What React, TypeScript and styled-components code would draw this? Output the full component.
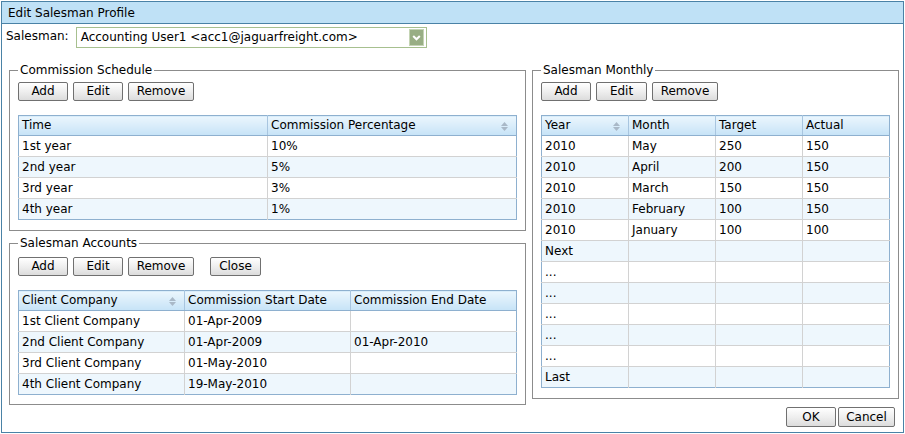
import React from "react";
import styled, { createGlobalStyle } from "styled-components";

const GlobalStyle = createGlobalStyle`
  html, body {
    margin: 0;
    padding: 0;
    background: #ffffff;
  }
  body {
    font-family: "DejaVu Sans", Verdana, sans-serif;
    font-size: 12px;
    color: #000000;
  }
  * {
    box-sizing: border-box;
  }
`;

const Dialog = styled.div`
  margin: 1px;
  width: 903px;
  height: 432px;
  border: 1px solid #4a82a6;
  display: flex;
  flex-direction: column;
`;

const TitleBar = styled.div`
  height: 22px;
  padding: 2px 0 0 6px;
  line-height: 19px;
  background: #bfe1f6;
  border-bottom: 1px solid #4a82a6;
`;

const SalesmanRow = styled.div`
  display: flex;
  align-items: flex-start;
  gap: 7px;
  margin-top: 3px;
  padding-left: 4px;
`;

const FieldLabel = styled.label`
  margin-top: 2px;
  line-height: 14px;
`;

const SelectBox = styled.div`
  width: 351px;
  height: 21px;
  border: 1px solid #a7c08f;
  display: flex;
  align-items: center;
  justify-content: space-between;
  padding: 0 2px 0 4px;
  line-height: 19px;
`;

const Columns = styled.div`
  display: flex;
  gap: 6px;
  margin-top: 15px;
  padding-left: 7px;
`;

const LeftColumn = styled.div`
  width: 517px;
  display: flex;
  flex-direction: column;
  gap: 5px;
`;

const RightColumn = styled.div`
  width: 367px;
  display: flex;
  flex-direction: column;
`;

const GroupBox = styled.fieldset<{ $top?: number; $bottom?: number }>`
  margin: 0;
  padding: ${(p) => p.$top ?? 5}px 8px ${(p) => p.$bottom ?? 10}px;
  border: 1px solid #8c8c8c;
  min-width: 0;
`;

const GroupLegend = styled.legend`
  padding: 0 2px;
  line-height: 14px;
`;

const ButtonRow = styled.div`
  display: flex;
  gap: 5px;
  margin-bottom: 14px;
`;

const PushButton = styled.button<{ $w: number; $h?: number; $gapBefore?: number }>`
  width: ${(p) => p.$w}px;
  height: ${(p) => p.$h ?? 19}px;
  margin-left: ${(p) => p.$gapBefore ?? 0}px;
  padding: 0;
  font: inherit;
  line-height: 17px;
  color: #000000;
  background: linear-gradient(#ffffff, #ededed 55%, #dcdcdc);
  border: 1px solid #707070;
  border-radius: 2px;
`;

const Footer = styled.div`
  display: flex;
  justify-content: flex-end;
  gap: 2px;
  margin-top: 8px;
  padding-right: 4px;
`;

const Grid = styled.table`
  width: 100%;
  table-layout: fixed;
  border-collapse: collapse;
  border: 1px solid #8eb0cf;
`;

const HeadCell = styled.th`
  padding: 0 3px;
  line-height: 19px;
  font-weight: normal;
  text-align: left;
  white-space: nowrap;
  background: linear-gradient(#ebf6fd, #c6e3f7);
  border-bottom: 1px solid #8eb0cf;
  border-right: 1px solid #a8c5df;
  &:last-child {
    border-right: none;
  }
`;

const HeadInner = styled.span`
  display: flex;
  align-items: center;
  justify-content: space-between;
`;

const BodyRow = styled.tr<{ $alt: boolean }>`
  background: ${(p) => (p.$alt ? "#eef7fd" : "#ffffff")};
  &:last-child td {
    border-bottom: none;
  }
`;

const BodyCell = styled.td`
  padding: 0 3px;
  line-height: 20px;
  white-space: nowrap;
  overflow: hidden;
  border-bottom: 1px solid #d2d2d2;
  border-right: 1px solid #d2d2d2;
  &:last-child {
    border-right: none;
  }
`;

const SortMark = styled.svg`
  flex: none;
  margin: 1px 5px 0 0;
`;

const SortIcon = () => (
  <SortMark width="7" height="9" viewBox="0 0 7 9">
    <path d="M3.5 0 L7 4 H0 Z" fill="#a9b8c7" />
    <path d="M0 5 H7 L3.5 9 Z" fill="#a9b8c7" />
  </SortMark>
);

const DropArrow = () => (
  <svg width="15" height="17" viewBox="0 0 15 17">
    <rect x="0.5" y="0.5" width="14" height="16" fill="#98ae84" stroke="#c4d4b4" />
    <path d="M4.2 7 L7.5 10.3 L10.8 7" fill="none" stroke="#ffffff" strokeWidth="2" />
  </svg>
);

type Column = { title: string; sortable?: boolean };

const DataTable = ({ columns, rows }: { columns: Column[]; rows: string[][] }) => (
  <Grid>
    <thead>
      <tr>
        {columns.map((c) => (
          <HeadCell key={c.title}>
            <HeadInner>
              {c.title}
              {c.sortable && <SortIcon />}
            </HeadInner>
          </HeadCell>
        ))}
      </tr>
    </thead>
    <tbody>
      {rows.map((r, i) => (
        <BodyRow key={i} $alt={i % 2 === 1}>
          {r.map((v, j) => (
            <BodyCell key={j}>{v || "\u00a0"}</BodyCell>
          ))}
        </BodyRow>
      ))}
    </tbody>
  </Grid>
);

const commissionRows = [
  ["1st year", "10%"],
  ["2nd year", "5%"],
  ["3rd year", "3%"],
  ["4th year", "1%"],
];

const accountRows = [
  ["1st Client Company", "01-Apr-2009", ""],
  ["2nd Client Company", "01-Apr-2009", "01-Apr-2010"],
  ["3rd Client Company", "01-May-2010", ""],
  ["4th Client Company", "19-May-2010", ""],
];

const monthlyRows = [
  ["2010", "May", "250", "150"],
  ["2010", "April", "200", "150"],
  ["2010", "March", "150", "150"],
  ["2010", "February", "100", "150"],
  ["2010", "January", "100", "100"],
  ["Next", "", "", ""],
  ["...", "", "", ""],
  ["...", "", "", ""],
  ["...", "", "", ""],
  ["...", "", "", ""],
  ["...", "", "", ""],
  ["Last", "", "", ""],
];

const App = () => {
  return (
    <>
      <GlobalStyle />
      <Dialog>
        <TitleBar>Edit Salesman Profile</TitleBar>
        <SalesmanRow>
          <FieldLabel>Salesman:</FieldLabel>
          <SelectBox>
            <span>Accounting User1 &lt;acc1@jaguarfreight.com&gt;</span>
            <DropArrow />
          </SelectBox>
        </SalesmanRow>
        <Columns>
          <LeftColumn>
            <GroupBox>
              <GroupLegend>Commission Schedule</GroupLegend>
              <ButtonRow>
                <PushButton $w={50}>Add</PushButton>
                <PushButton $w={50}>Edit</PushButton>
                <PushButton $w={66}>Remove</PushButton>
              </ButtonRow>
              <DataTable
                columns={[{ title: "Time" }, { title: "Commission Percentage", sortable: true }]}
                rows={commissionRows}
              />
            </GroupBox>
            <GroupBox $top={7} $bottom={9}>
              <GroupLegend>Salesman Accounts</GroupLegend>
              <ButtonRow>
                <PushButton $w={50}>Add</PushButton>
                <PushButton $w={50}>Edit</PushButton>
                <PushButton $w={66}>Remove</PushButton>
                <PushButton $w={51} $gapBefore={11}>
                  Close
                </PushButton>
              </ButtonRow>
              <DataTable
                columns={[
                  { title: "Client Company", sortable: true },
                  { title: "Commission Start Date" },
                  { title: "Commission End Date" },
                ]}
                rows={accountRows}
              />
            </GroupBox>
          </LeftColumn>
          <RightColumn>
            <GroupBox>
              <GroupLegend>Salesman Monthly</GroupLegend>
              <ButtonRow>
                <PushButton $w={50}>Add</PushButton>
                <PushButton $w={51}>Edit</PushButton>
                <PushButton $w={66}>Remove</PushButton>
              </ButtonRow>
              <DataTable
                columns={[
                  { title: "Year", sortable: true },
                  { title: "Month" },
                  { title: "Target" },
                  { title: "Actual" },
                ]}
                rows={monthlyRows}
              />
            </GroupBox>
            <Footer>
              <PushButton $w={50} $h={20}>
                OK
              </PushButton>
              <PushButton $w={57} $h={20}>
                Cancel
              </PushButton>
            </Footer>
          </RightColumn>
        </Columns>
      </Dialog>
    </>
  );
};

export default App;
